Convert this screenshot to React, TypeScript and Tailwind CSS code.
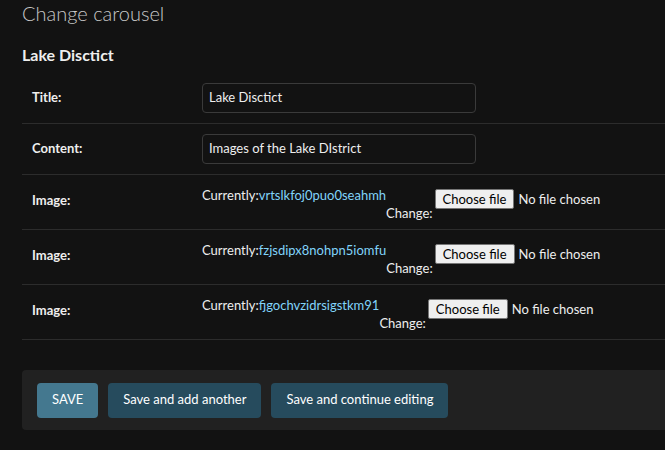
import React from 'react';

const font = "font-['Lato',_'Noto_Sans',_sans-serif]";

function TextRow({ label, value }: { label: string; value: string }) {
  return (
    <div className="flex items-center h-[51px] pl-[10px] border-b border-[#2c2c2c]">
      <label className="w-[170px] text-[13px] font-bold text-[#eeeeee]">{label}</label>
      <div className="h-[30px] w-[274px] rounded-[4px] border border-[#3a3a3a] flex items-center px-[6px] text-[13px] text-[#eeeeee]">
        {value}
      </div>
    </div>
  );
}

function ImageRow({ current }: { current: string }) {
  return (
    <div className="flex h-[55px] pl-[10px] border-b border-[#2c2c2c]">
      <label className="w-[170px] self-center -mt-[3px] text-[13px] font-bold text-[#eeeeee]">Image:</label>
      <div className="flex items-start pt-[10px] text-[13px] text-[#eeeeee]">
        <span className="leading-[16px] mt-[2px]">
          Currently:<a className="text-[#81d4fa]">{current}</a>
        </span>
        <span className="leading-[16px] mt-[20px]">Change:</span>
        <div className="flex items-center mt-[4px] ml-[2px]">
          <button className="h-[20px] px-[7px] bg-[#efefef] border border-[#767676] rounded-[2px] text-[13px] leading-[16px] text-black">
            Choose file
          </button>
          <span className="ml-[4px] leading-[16px]">No file chosen</span>
        </div>
      </div>
    </div>
  );
}

export default function App() {
  return (
    <div className={`min-h-[450px] bg-[#121212] pl-[22px] ${font}`}>
      <h1 className="text-[20px] font-light text-[#c8c8c8] leading-[26px] pt-0">Change carousel</h1>
      <h2 className="mt-[20px] text-[16px] font-bold text-[#eeeeee] leading-[18px]">Lake Disctict</h2>
      <div className="mt-[9px]">
        <TextRow label="Title:" value="Lake Disctict" />
        <TextRow label="Content:" value="Images of the Lake DIstrict" />
        <ImageRow current="vrtslkfoj0puo0seahmh" />
        <ImageRow current="fzjsdipx8nohpn5iomfu" />
        <ImageRow current="fjgochvzidrsigstkm91" />
      </div>
      <div className="mt-[30px] h-[60px] bg-[#212121] rounded-l-[4px] flex items-center gap-[10px] pl-[15px]">
        <button className="h-[35px] px-[15px] rounded-[4px] bg-[#44788f] text-[13px] text-white">SAVE</button>
        <button className="h-[35px] px-[15px] rounded-[4px] bg-[#264b5d] text-[13px] text-white">Save and add another</button>
        <button className="h-[35px] px-[15px] rounded-[4px] bg-[#264b5d] text-[13px] text-white">Save and continue editing</button>
      </div>
    </div>
  );
}
